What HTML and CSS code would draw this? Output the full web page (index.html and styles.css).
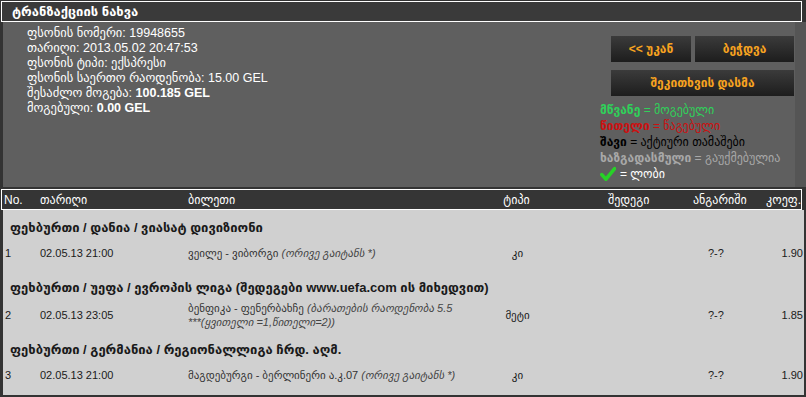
FILE: index.html
```html
<!DOCTYPE html>
<html lang="ka">
<head>
<meta charset="utf-8">
<title>ტრანზაქციის ნახვა</title>
<link rel="stylesheet" href="styles.css">
</head>
<body>
<div class="page">
  <div class="title">ტრანზაქციის ნახვა</div>
  <div class="info">
    <div class="details">
      <div>ფსონის ნომერი: 19948655</div>
      <div>თარიღი: 2013.05.02 20:47:53</div>
      <div>ფსონის ტიპი: ექსპრესი</div>
      <div>ფსონის საერთო რაოდენობა: 15.00 GEL</div>
      <div>შესაძლო მოგება: <b>100.185 GEL</b></div>
      <div>მოგებული: <b>0.00 GEL</b></div>
    </div>
    <div class="side">
      <div class="btns">
        <a class="btn">&lt;&lt; უკან</a>
        <a class="btn btn-print">ბეჭდვა</a>
        <a class="btn btn-wide">შეკითხვის დასმა</a>
      </div>
      <div class="legend">
        <div class="lg-green"><b>მწვანე</b> = მოგებული</div>
        <div class="lg-red"><b>წითელი</b> = წაგებული</div>
        <div class="lg-black"><b>შავი</b> = აქტიური თამაშები</div>
        <div class="lg-gray"><b>ხაზგადასმული</b> = გაუქმებულია</div>
        <div class="lg-lobby"><svg class="check" width="16" height="16" viewBox="0 0 16 16"><path d="M1.8 8.6 L6 13.2 L14.6 2.6" fill="none" stroke="#27d127" stroke-width="3.6" stroke-linecap="round" stroke-linejoin="round"/></svg> = ლობი</div>
      </div>
    </div>
  </div>
  <div class="thead">
    <div class="c1">No.</div>
    <div class="c2">თარიღი</div>
    <div class="c3">ბილეთი</div>
    <div class="c4">ტიპი</div>
    <div class="c5 h5">შედეგი</div>
    <div class="c6 h6">ანგარიში</div>
    <div class="c7">კოეფ.</div>
  </div>
  <div class="tbody">
    <div class="group">ფეხბურთი / დანია / ვიასატ დივიზიონი</div>
    <div class="row">
      <div class="c1">1</div>
      <div class="c2">02.05.13 21:00</div>
      <div class="c3 ticket">ვეილე - ვიბორგი <i>(ორივე გაიტანს *)</i></div>
      <div class="c4">კი</div>
      <div class="c5"></div>
      <div class="c6">?-?</div>
      <div class="c7">1.90</div>
    </div>
    <div class="group">ფეხბურთი / უეფა / ევროპის ლიგა (შედეგები www.uefa.com ის მიხედვით)</div>
    <div class="row row-multi">
      <div class="c1">2</div>
      <div class="c2">02.05.13 23:05</div>
      <div class="c3 ticket">ბენფიკა - ფენერბახჩე <i>(ბარათების რაოდენობა 5.5<br>***(ყვითელი =1,წითელი=2))</i></div>
      <div class="c4">მეტი</div>
      <div class="c5"></div>
      <div class="c6">?-?</div>
      <div class="c7">1.85</div>
    </div>
    <div class="group">ფეხბურთი / გერმანია / რეგიონალლიგა ჩრდ. აღმ.</div>
    <div class="row">
      <div class="c1">3</div>
      <div class="c2">02.05.13 21:00</div>
      <div class="c3 ticket">მაგდებურგი - ბერლინერი ა.კ.07 <i>(ორივე გაიტანს *)</i></div>
      <div class="c4">კი</div>
      <div class="c5"></div>
      <div class="c6">?-?</div>
      <div class="c7">1.90</div>
    </div>
  </div>
</div>
</body>
</html>
```
FILE: styles.css
```css
html, body {
  margin: 0;
  padding: 0;
}
body {
  background: #333333;
  font-family: "Liberation Sans", Arial, "DejaVu Sans", sans-serif;
  font-size: 12px;
  color: #ffffff;
  width: 806px;
  height: 397px;
  overflow: hidden;
}
.page {
  display: flex;
  flex-direction: column;
}
.title {
  margin: 1px 4px 0 1px;
  height: 19px;
  line-height: 19px;
  border: 1px solid #ffffff;
  background: #3a3a3a;
  padding-left: 10px;
  font-weight: bold;
  font-size: 13px;
}
.info {
  margin-left: 3px;
  height: 165px;
  background: #5f5f5f;
  border-right: 11px solid #555555;
  display: flex;
  justify-content: space-between;
}
.details {
  padding: 4px 0 0 24px;
  line-height: 15px;
  font-size: 12.5px;
}
.side {
  width: 195px;
  display: flex;
  flex-direction: column;
}
.btns {
  margin: 14px 0 0 11px;
  display: grid;
  grid-template-columns: 80px 99px;
  column-gap: 4px;
  row-gap: 8px;
}
.btn {
  height: 26px;
  line-height: 26px;
  text-align: center;
  background: linear-gradient(#3b3b3b, #1d1d1d);
  color: #f7a320;
  font-weight: bold;
  font-size: 12px;
  text-decoration: none;
}
.btn-wide {
  grid-column: 1 / 3;
}
.legend {
  margin-top: 6px;
  line-height: 16px;
}
.lg-green { color: #2fd15a; }
.lg-red { color: #cc1010; }
.lg-black { color: #000000; }
.lg-gray { color: #a8a8a8; }
.lg-lobby {
  color: #ffffff;
  display: flex;
  align-items: center;
  gap: 4px;
}
.check {
  display: block;
}
.thead {
  margin: 2px 0 0 1px;
  width: 799px;
  height: 19px;
  border: 1px solid #ffffff;
  background: #353535;
  display: grid;
  grid-template-columns: 37px 148px 292px 75px 135px 60px 1fr;
  align-items: center;
}
.tbody {
  margin-left: 3px;
  width: 801px;
  background: #d0d0d0;
  color: #1a1a1a;
  padding-bottom: 3px;
}
.row {
  display: grid;
  grid-template-columns: 37px 148px 292px 75px 135px 60px 1fr;
  align-items: center;
  padding: 5px 0 9px;
  line-height: 16px;
  font-size: 11px;
}
.row-multi {
  padding: 1px 0 3px;
}
.row-multi .ticket {
  line-height: 14px;
}
.c1 { padding-left: 2px; }
.c2 { padding-left: 1px; }
.c3 { padding-left: 1px; }
.c4 { text-align: center; }
.c6 { padding-left: 18px; }
.c7 { text-align: right; padding-right: 1px; }
.thead .c7 { padding-right: 0; }
.h5 { padding-left: 54px; }
.thead .h6 { padding-left: 4px; }
.row .c2 { padding-left: 0; }
.row .c3 { padding-left: 0; }
.ticket {
  color: #333333;
}
.ticket i {
  color: #444444;
}
.group {
  padding: 10px 0 4px 7px;
  line-height: 16px;
  font-weight: bold;
  font-size: 13px;
}
```
